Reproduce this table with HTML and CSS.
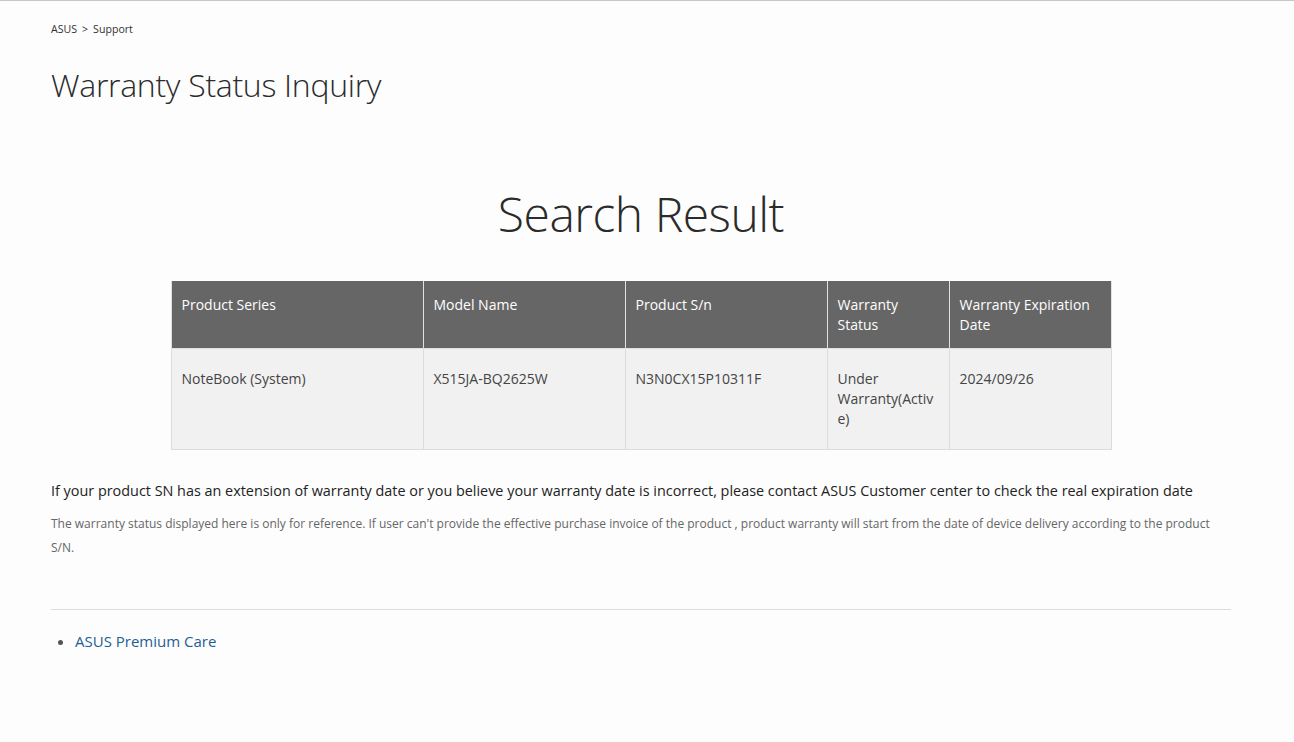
FILE: index.html
```html
<!DOCTYPE html>
<html lang="en">
<head>
<meta charset="utf-8">
<title>Warranty Status Inquiry</title>
<link rel="stylesheet" href="styles.css">
</head>
<body>
<div class="page">
  <nav class="crumbs"><span>ASUS</span><span class="sep">&gt;</span><span>Support</span></nav>
  <h1 class="title">Warranty Status Inquiry</h1>
  <h2 class="result-title">Search Result</h2>
  <table class="result">
    <colgroup>
      <col class="c1"><col class="c2"><col class="c3"><col class="c4"><col class="c5">
    </colgroup>
    <thead>
      <tr>
        <th>Product Series</th>
        <th>Model Name</th>
        <th>Product S/n</th>
        <th>Warranty Status</th>
        <th>Warranty Expiration Date</th>
      </tr>
    </thead>
    <tbody>
      <tr>
        <td>NoteBook (System)</td>
        <td>X515JA-BQ2625W</td>
        <td>N3N0CX15P10311F</td>
        <td class="brk">Under Warranty(Active)</td>
        <td>2024/09/26</td>
      </tr>
    </tbody>
  </table>
  <p class="notice">If your product SN has an extension of warranty date or you believe your warranty date is incorrect, please contact ASUS Customer center to check the real expiration date</p>
  <p class="disclaimer">The warranty status displayed here is only for reference. If user can't provide the effective purchase invoice of the product , product warranty will start from the date of device delivery according to the product S/N.</p>
  <hr class="divider">
  <ul class="links">
    <li><a href="#">ASUS Premium Care</a></li>
  </ul>
</div>
</body>
</html>
```
FILE: styles.css
```css
html, body {
  margin: 0;
  padding: 0;
  background: #fdfdfd;
}
body {
  border-top: 1px solid #c8c8c8;
  font-family: "Open Sans", "Noto Sans", sans-serif;
  color: #333;
}
.page {
  width: 1180px;
  margin-left: 51px;
  padding-top: 20px;
}
.crumbs {
  font-size: 10.6px;
  color: #333;
  display: flex;
  gap: 5px;
  line-height: 16px;
}
.title {
  font-weight: 300;
  font-size: 32px;
  line-height: 40px;
  margin: 28px 0 0 0;
  color: #2b2b2b;
  letter-spacing: -0.3px;
}
.result-title {
  text-align: center;
  font-weight: 300;
  font-size: 48px;
  line-height: 60px;
  margin: 79px 0 0 0;
  color: #2b2b2b;
  letter-spacing: -0.5px;
}
.result {
  margin: 37px auto 0;
  width: 940px;
  border-collapse: collapse;
  table-layout: fixed;
  font-size: 14px;
}
.c1 { width: 252px; }
.c2 { width: 202px; }
.c3 { width: 202px; }
.c4 { width: 122px; }
.c5 { width: 162px; }
.result th {
  background: #666;
  color: #fff;
  font-weight: 400;
  text-align: left;
  vertical-align: top;
  padding: 14px 10px 11px 10px;
  height: 67px;
  box-sizing: border-box;
  line-height: 20px;
  border: 1px solid #e0e0e0;
  border-top: none;
}
.result td {
  background: #f1f1f1;
  color: #444;
  vertical-align: top;
  padding: 20px 10px 9px 10px;
  height: 101px;
  box-sizing: border-box;
  line-height: 20px;
  border: 1px solid #dcdcdc;
}
.brk { overflow-wrap: anywhere; }
.notice {
  font-size: 14.4px;
  color: #222;
  margin: 30px 0 0 0;
  line-height: 22px;
}
.disclaimer {
  font-size: 12px;
  color: #666;
  line-height: 24px;
  margin: 10px 0 0 0;
}
.divider {
  border: none;
  border-top: 1px solid #ddd;
  margin: 49px 0 0 0;
}
.links {
  margin: 20px 0 0 0;
  padding-left: 24px;
  color: #555;
  font-size: 15px;
  line-height: 22px;
}
.links a {
  color: #1d5f94;
  text-decoration: none;
}
```
